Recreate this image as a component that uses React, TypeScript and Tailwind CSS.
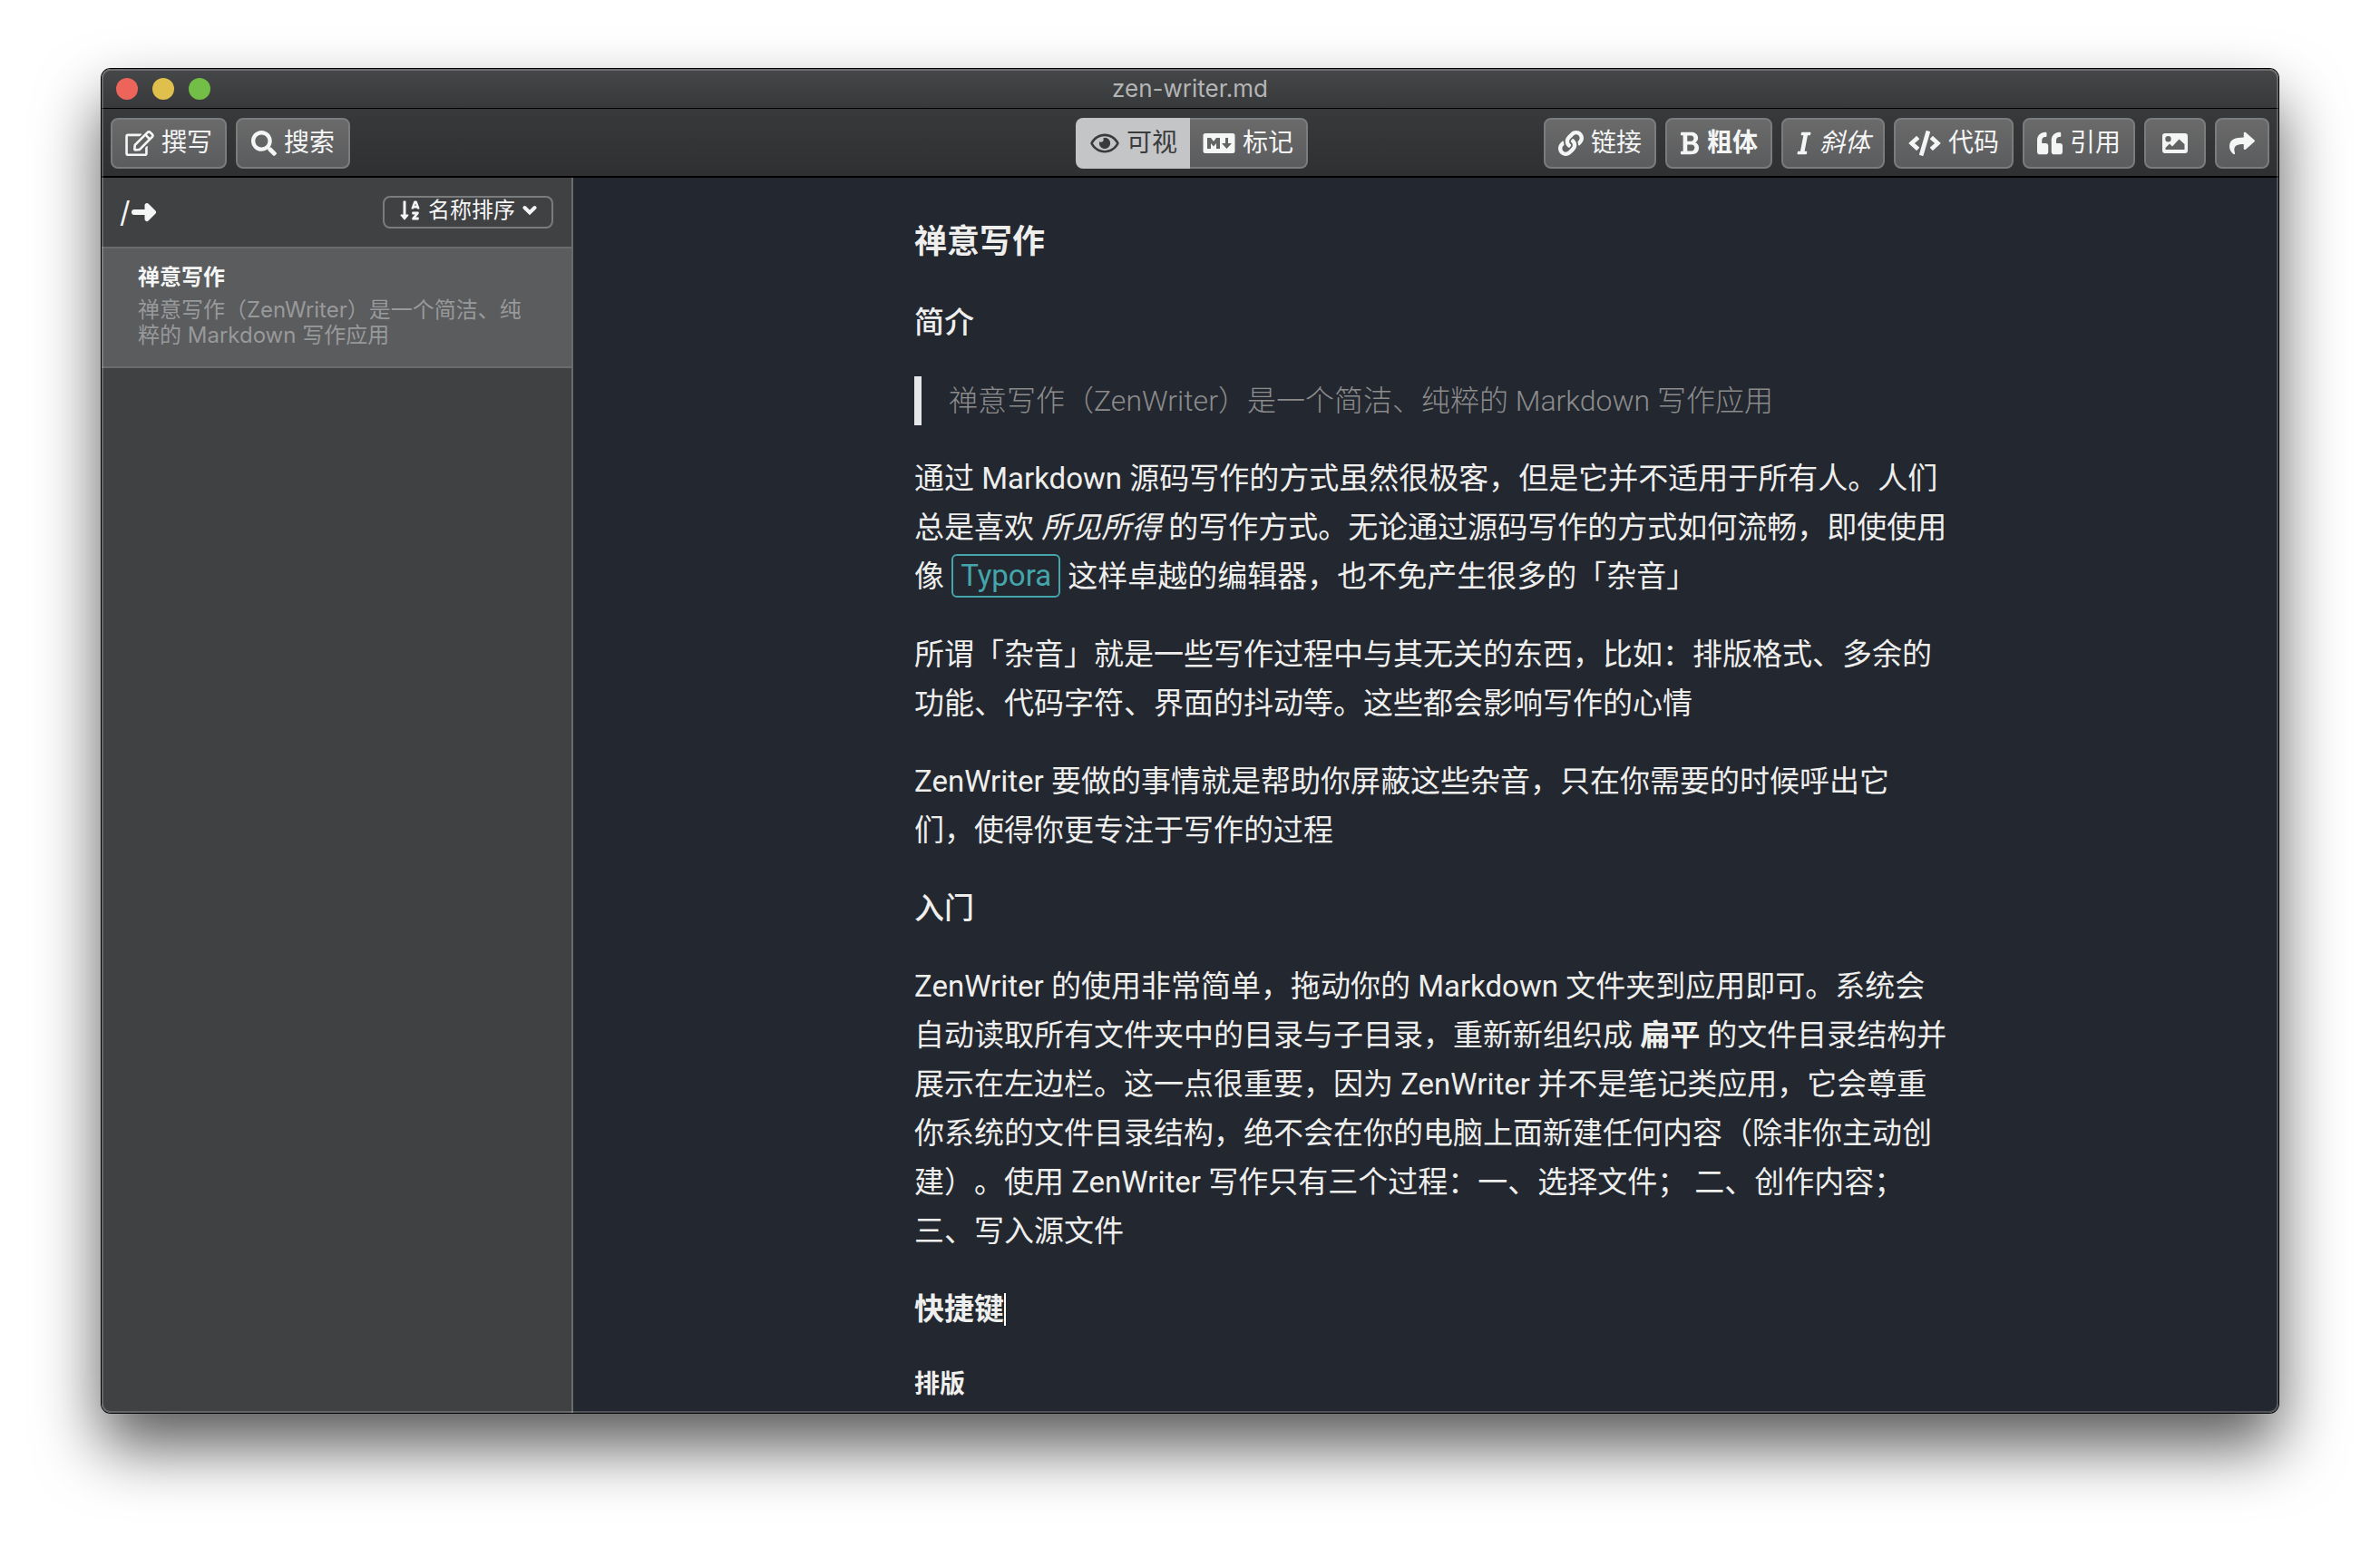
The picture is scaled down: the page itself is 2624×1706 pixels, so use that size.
import type { ReactNode } from 'react';
import {
  FaRegEdit,
  FaSearch,
  FaRegEye,
  FaLink,
  FaCode,
  FaQuoteLeft,
  FaShare,
  FaSortAlphaDown,
} from 'react-icons/fa';

function MarkdownIcon() {
  return (
    <svg viewBox="0 0 36 24" className="h-6 w-9" aria-hidden="true">
      <path
        fill="currentColor"
        fillRule="evenodd"
        d="M3 1h30a2.5 2.5 0 0 1 2.5 2.5v17a2.5 2.5 0 0 1-2.5 2.5H3a2.5 2.5 0 0 1-2.5-2.5v-17A2.5 2.5 0 0 1 3 1zM5 18h4v-6l3 3.600 3-3.600v6h4V6h-4l-3 4-3-4H5zM25 6v6h-4l5.500 6 5.500-6h-4V6z"
      />
    </svg>
  );
}

function BoldIcon() {
  return (
    <svg viewBox="0 0 384 512" className="h-7 w-[22px]" fill="currentColor" aria-hidden="true">
      <path d="M304.793 243.891c33.639-18.537 53.657-54.16 53.657-95.693 0-48.236-26.25-87.626-68.626-104.179C265.138 34.01 240.849 32 209.661 32H24c-8.837 0-16 7.163-16 16v33.049c0 8.837 7.163 16 16 16h33.113v318.53H24c-8.837 0-16 7.163-16 16V464c0 8.837 7.163 16 16 16h195.69c24.203 0 44.834-1.289 66.866-7.584C337.52 457.193 376 410.647 376 350.014c0-52.168-26.573-91.684-71.207-106.123zM142.217 100.809h67.444c16.294 0 27.536 2.019 37.525 6.717 15.828 8.479 24.906 26.502 24.906 49.446 0 35.029-20.32 56.79-53.029 56.79h-76.846V100.809zm112.642 305.475c-10.14 4.056-22.677 4.907-31.409 4.907h-81.233V281.943h84.367c39.645 0 63.057 25.38 63.057 63.057.001 28.425-13.66 52.483-34.782 61.284z" />
    </svg>
  );
}

function ItalicIcon() {
  return (
    <svg viewBox="0 0 320 512" className="h-7 w-[18px]" fill="currentColor" aria-hidden="true">
      <path d="M204.758 416h-33.849l62.092-320h40.725a16 16 0 0 0 15.704-12.937l6.242-32C297.599 41.184 290.034 32 279.968 32H120.235a16 16 0 0 0-15.704 12.937l-6.242 32C96.362 86.816 103.927 96 113.993 96h33.846l-62.09 320H46.278a16 16 0 0 0-15.704 12.935l-6.245 32C22.402 470.815 29.967 480 40.034 480h158.479a16 16 0 0 0 15.704-12.935l6.245-32c1.927-9.88-5.638-19.065-15.704-19.065z" />
    </svg>
  );
}

function ImageIcon() {
  return (
    <svg viewBox="0 0 28 22" className="h-[22px] w-7" aria-hidden="true">
      <path
        fill="currentColor"
        fillRule="evenodd"
        d="M3 0h22a3 3 0 0 1 3 3v16a3 3 0 0 1-3 3H3a3 3 0 0 1-3-3V3a3 3 0 0 1 3-3zM6.500 3a3.200 3.200 0 1 0 0 6.400a3.200 3.200 0 0 0 0-6.400zM3.500 18h21v-6l-6-5.500-7.500 8-3-3-4.500 4.500z"
      />
    </svg>
  );
}

function ArrowIcon() {
  return (
    <svg viewBox="0 0 28 24" className="h-6 w-7" aria-hidden="true">
      <path d="M4 12h16" fill="none" stroke="currentColor" strokeWidth="6" strokeLinecap="round" />
      <path d="M18 4.500l7.500 7.500-7.500 7.500z" fill="currentColor" stroke="currentColor" strokeWidth="5" strokeLinejoin="round" />
    </svg>
  );
}

function ChevronIcon() {
  return (
    <svg viewBox="0 0 16 12" className="h-3 w-4" aria-hidden="true">
      <path d="M2.500 3l5.500 5.500 5.500-5.500" fill="none" stroke="currentColor" strokeWidth="4" strokeLinecap="round" strokeLinejoin="miter" />
    </svg>
  );
}

const surface = 'border-2 border-[#7b7c7d] bg-linear-to-b from-[#6a6a6a] to-[#5b5c5e] text-[#f4f5f5]';

function ToolButton({ children, label, className = 'px-3.5' }: { children: ReactNode; label?: string; className?: string }) {
  return (
    <button
      type="button"
      aria-label={label}
      className={`flex h-14 items-center gap-2 whitespace-nowrap rounded-lg text-[28px] leading-none ${surface} ${className}`}
    >
      {children}
    </button>
  );
}

function Toolbar() {
  return (
    <div className="grid h-[76px] shrink-0 grid-cols-[1fr_auto_1fr] items-center border-b-2 border-black bg-linear-to-b from-[#38393b] to-[#2f3031] px-2.5 pt-0.5">
      <div className="flex gap-2.5">
        <ToolButton>
          <FaRegEdit className="h-7 w-8" />
          撰写
        </ToolButton>
        <ToolButton className="px-[15px]">
          <FaSearch className="size-7" />
          搜索
        </ToolButton>
      </div>
      <div className="ml-1 flex">
        <button type="button" aria-pressed="true" className="flex h-14 items-center gap-2 whitespace-nowrap rounded-l-lg bg-[#c4c5c7] pl-4 pr-3.5 text-[28px] leading-none text-[#3a3b3d]">
          <FaRegEye className="h-7 w-8" />
          可视
        </button>
        <button type="button" aria-pressed="false" className={`flex h-14 items-center gap-2 whitespace-nowrap rounded-r-lg border-l-0 px-3.5 text-[28px] leading-none ${surface}`}>
          <MarkdownIcon />
          标记
        </button>
      </div>
      <div className="flex justify-end gap-2.5">
        <ToolButton>
          <FaLink className="size-7" />
          链接
        </ToolButton>
        <ToolButton className="px-3.5 font-semibold">
          <BoldIcon />
          粗体
        </ToolButton>
        <ToolButton className="px-3.5 italic">
          <ItalicIcon />
          斜体
        </ToolButton>
        <ToolButton>
          <FaCode className="h-7 w-9" />
          代码
        </ToolButton>
        <ToolButton>
          <FaQuoteLeft className="size-7" />
          引用
        </ToolButton>
        <ToolButton label="图片" className="px-[18px]">
          <ImageIcon />
        </ToolButton>
        <ToolButton label="分享">
          <FaShare className="size-7" />
        </ToolButton>
      </div>
    </div>
  );
}

function Sidebar() {
  return (
    <aside className="flex w-[520px] shrink-0 flex-col border-r-2 border-[#6a6b6c] bg-[#404143] font-['Inter','Noto_Sans_CJK_SC',sans-serif] text-[#f4f5f5]">
      <div className="flex h-[76px] items-center justify-between px-5">
        <button type="button" aria-label="根目录" className="flex items-center text-[32px] leading-none">
          <span>/</span>
          <ArrowIcon />
        </button>
        <button type="button" className="flex h-9 items-center gap-2 whitespace-nowrap rounded-lg border-2 border-[#7b7c7d] px-4 pb-1 text-2xl leading-none">
          <FaSortAlphaDown className="size-6" />
          名称排序
          <ChevronIcon />
        </button>
      </div>
      <a href="#zen-writer" className="block border-y-2 border-[#6a6b6c] bg-[#5b5c5e] px-10 pb-5 pt-3.5 text-2xl">
        <h2 className="font-semibold leading-9">禅意写作</h2>
        <p className="mt-1 whitespace-nowrap leading-7 text-[#98999a]">
          禅意写作（ZenWriter）是一个简洁、纯
          <br />
          粹的 Markdown 写作应用
        </p>
      </a>
    </aside>
  );
}

function Editor() {
  return (
    <main className="min-w-0 flex-1 overflow-hidden bg-[#232730] text-[#eeeeec]">
      <article className="mx-auto flex w-3/5 flex-col gap-8 whitespace-nowrap pt-[41px] text-[33px] leading-[54px]">
        <h1 className="text-4xl font-semibold leading-[60px]">禅意写作</h1>
        <h2 className="font-medium">简介</h2>
        <blockquote className="border-l-8 border-[#e5e7eb] pl-[30px] text-[32px] font-light leading-[54px] text-[#8c8c8c]">
          禅意写作（ZenWriter）是一个简洁、纯粹的 Markdown 写作应用
        </blockquote>
        <p>
          通过 Markdown 源码写作的方式虽然很极客，但是它并不适用于所有人。人们
          <br />
          总是喜欢 <em>所见所得</em> 的写作方式。无论通过源码写作的方式如何流畅，即使使用
          <br />
          像{' '}
          <a href="#typora" className="mt-0.5 inline-block h-12 rounded-md border-2 border-[#44a5aa] px-2 align-top leading-[44px] text-[#44a5aa]">
            Typora
          </a>{' '}
          这样卓越的编辑器，也不免产生很多的「杂音」
        </p>
        <p>
          所谓「杂音」就是一些写作过程中与其无关的东西，比如：排版格式、多余的
          <br />
          功能、代码字符、界面的抖动等。这些都会影响写作的心情
        </p>
        <p>
          ZenWriter 要做的事情就是帮助你屏蔽这些杂音，只在你需要的时候呼出它
          <br />
          们，使得你更专注于写作的过程
        </p>
        <h2 className="font-medium">入门</h2>
        <p>
          ZenWriter 的使用非常简单，拖动你的 Markdown 文件夹到应用即可。系统会
          <br />
          自动读取所有文件夹中的目录与子目录，重新新组织成 <strong className="font-semibold">扁平</strong> 的文件目录结构并
          <br />
          展示在左边栏。这一点很重要，因为 ZenWriter 并不是笔记类应用，它会尊重
          <br />
          你系统的文件目录结构，绝不会在你的电脑上面新建任何内容（除非你主动创
          <br />
          建）。使用 ZenWriter 写作只有三个过程：一、选择文件； 二、创作内容；
          <br />
          三、写入源文件
        </p>
        <h2 className="flex items-center font-semibold">
          快捷键
          <span className="h-9 w-0.5 bg-white" />
        </h2>
        <h3 className="text-[28px] font-semibold leading-[48px]">排版</h3>
      </article>
    </main>
  );
}

export default function App() {
  return (
    <div
      lang="zh-CN"
      className="flex h-screen flex-col bg-white px-28 pb-[148px] pt-[76px] font-['Roboto','Noto_Sans_CJK_SC',sans-serif] [text-spacing-trim:space-all]"
    >
      <div className="relative flex min-h-0 flex-1 flex-col rounded-[10px] shadow-[0_0_0_1px_#000,0_37px_70px_rgba(0,0,0,0.65)]">
        <div className="flex min-h-0 flex-1 flex-col overflow-hidden rounded-[10px]">
          <header className="grid h-11 shrink-0 grid-cols-[1fr_auto_1fr] items-center border-b border-black bg-linear-to-b from-[#464749] to-[#38393b] px-4">
            <div className="flex gap-4">
              <button type="button" aria-label="关闭" className="size-6 rounded-full bg-[#ed655a]" />
              <button type="button" aria-label="最小化" className="size-6 rounded-full bg-[#e0c04c]" />
              <button type="button" aria-label="缩放" className="size-6 rounded-full bg-[#72be47]" />
            </div>
            <span className="font-['Inter',sans-serif] text-[26px] leading-8 text-[#b4b5b6]">zen-writer.md</span>
          </header>
          <Toolbar />
          <div className="flex min-h-0 flex-1">
            <Sidebar />
            <Editor />
          </div>
        </div>
        <div className="pointer-events-none absolute inset-0 rounded-[10px] border-2 border-white/20" />
      </div>
    </div>
  );
}
